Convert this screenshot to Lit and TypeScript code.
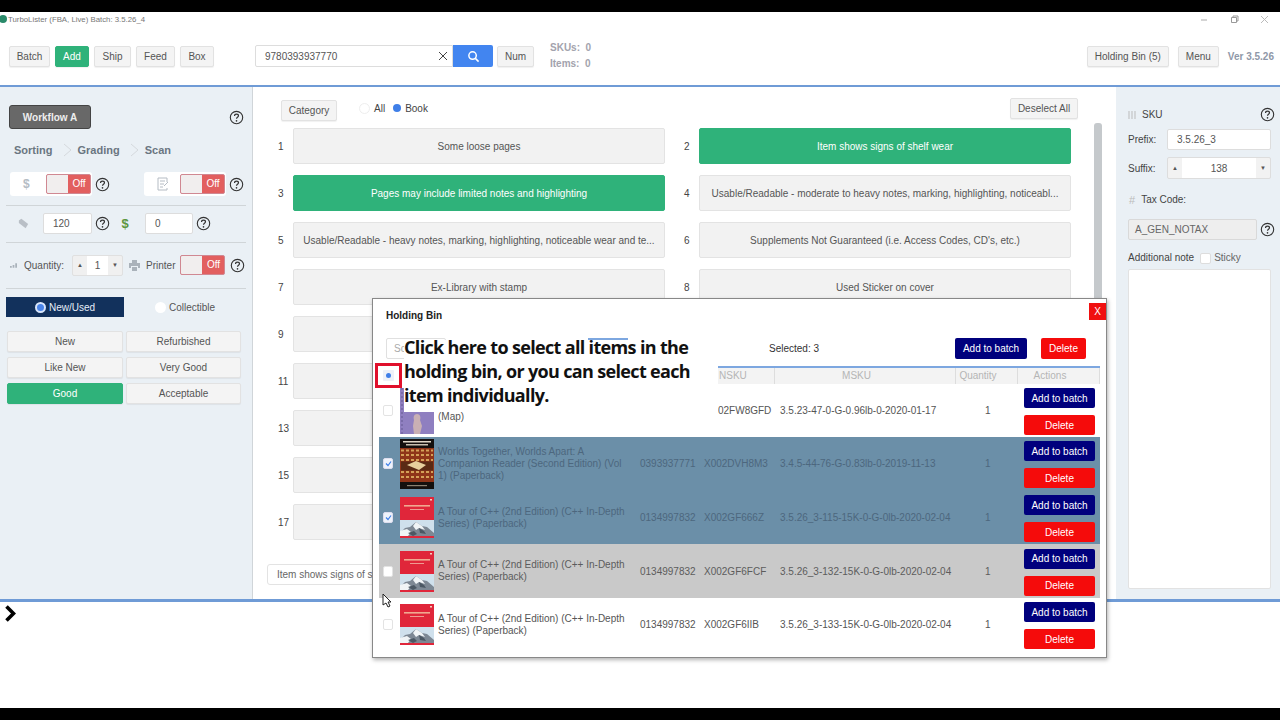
import { LitElement, html, css, svg } from "lit";
import { customElement } from "lit/decorators.js";

const q = html`<svg class="q" viewBox="0 0 16 16"><circle cx="8" cy="8" r="6.6" fill="none" stroke="#333" stroke-width="1.2"/><path d="M5.9 6.3c0-1.2 1-2 2.1-2s2.1.8 2.1 1.9c0 1.5-2.1 1.6-2.1 3.2" fill="none" stroke="#333" stroke-width="1.3"/><circle cx="8" cy="11.5" r=".9" fill="#333"/></svg>`;
const toggle = html`<span class="toggle"><span class="knob"></span><span class="off">Off</span></span>`;

const redBook = svg`<rect width="34" height="41" fill="#e0263a"/><rect x="4" y="8" width="26" height="1.6" fill="#f2c0a0" opacity=".85"/><rect x="10" y="12" width="14" height="1" fill="#f2b8a8" opacity=".8"/><rect x="30" y="2" width="2" height="1.5" fill="#f5d0c0"/><rect y="23" width="34" height="16" fill="#cfe0ec"/><path d="M0 36l5-5 5-1 6-5 6 4 5 1 7 6v3H0z" fill="#7d8894"/><path d="M16 25l6 4 3 4-6-2-3 2-3-4zM0 34l7-2 4 3-3 4H0z" fill="#f0f4f6"/><path d="M19 31l5 3 2 3-6-1zM8 36l6-2 3 3-4 2z" fill="#4c5864"/><rect y="39" width="34" height="2" fill="#e0263a"/>`;
const brownBook = svg`<rect width="34" height="50" fill="#14100e"/><rect x="3" y="2" width="28" height="1.5" fill="#e0d8c8"/><rect x="6" y="5" width="22" height="1.5" fill="#c8c0b0"/><rect x="0" y="9" width="34" height="34" fill="#8f3418"/><path d="M1 11.5h32M1 16h32M1 21h32M1 33h32M1 38h32" stroke="#d4a058" stroke-width="2" stroke-dasharray="3 2"/><path d="M1 27h32" stroke="#5a2a14" stroke-width="9"/><path d="M7 26l9-4 10 4-7 5z" fill="#e7cf9d"/><rect x="7" y="46" width="20" height="1.2" fill="#8a8070"/>`;
const mapBook = svg`<rect width="34" height="46" fill="#8f7fc0"/><path d="M17 26c3 0 4 3 3 6l2 6-2 8h-6l-1-8 1-6c-1-3 0-6 3-6z" fill="#c9b0b4"/><path d="M2 0v46" stroke="#655a92" stroke-dasharray="2 2"/>`;

const conditions = [
  ["1", "Some loose pages", false], ["2", "Item shows signs of shelf wear", true],
  ["3", "Pages may include limited notes and highlighting", true], ["4", "Usable/Readable - moderate to heavy notes, marking, highlighting, noticeabl...", false],
  ["5", "Usable/Readable - heavy notes, marking, highlighting, noticeable wear and te...", false], ["6", "Supplements Not Guaranteed (i.e. Access Codes, CD's, etc.)", false],
  ["7", "Ex-Library with stamp", false], ["8", "Used Sticker on cover", false],
  ["9", "", false], ["", "", false], ["11", "", false], ["", "", false],
  ["13", "", false], ["", "", false], ["15", "", false], ["", "", false],
  ["17", "", false], ["", "", false],
] as const;

const rows = [
  { cls: "plain", book: mapBook, h: 46, title: "(Map)", isbn: "", fnsku: "02FW8GFD", msku: "3.5.23-47-0-G-0.96lb-0-2020-01-17", check: "none" },
  { cls: "sel", book: brownBook, h: 50, title: "Worlds Together, Worlds Apart: A Companion Reader (Second Edition) (Vol 1) (Paperback)", isbn: "0393937771", fnsku: "X002DVH8M3", msku: "3.4.5-44-76-G-0.83lb-0-2019-11-13", check: "on" },
  { cls: "sel", book: redBook, h: 41, title: "A Tour of C++ (2nd Edition) (C++ In-Depth Series) (Paperback)", isbn: "0134997832", fnsku: "X002GF666Z", msku: "3.5.26_3-115-15K-0-G-0lb-2020-02-04", check: "on" },
  { cls: "hover", book: redBook, h: 41, title: "A Tour of C++ (2nd Edition) (C++ In-Depth Series) (Paperback)", isbn: "0134997832", fnsku: "X002GF6FCF", msku: "3.5.26_3-132-15K-0-G-0lb-2020-02-04", check: "white" },
  { cls: "plain", book: redBook, h: 41, title: "A Tour of C++ (2nd Edition) (C++ In-Depth Series) (Paperback)", isbn: "0134997832", fnsku: "X002GF6IIB", msku: "3.5.26_3-133-15K-0-G-0lb-2020-02-04", check: "none" },
];

@customElement("app-root")
export class AppRoot extends LitElement {
  static styles = css`
    :host { display: block; position: relative; width: 1280px; height: 720px; overflow: hidden; background: #000; font-family: "Liberation Sans", Arial, sans-serif; font-size: 10px; color: #444; }
    * { box-sizing: border-box; }
    .app { margin-top: 12px; height: 696px; background: #fff; display: flex; flex-direction: column; }
    .title { height: 14px; flex: none; display: flex; align-items: center; font-size: 7.8px; color: #777; }
    .title .logo { width: 8px; height: 8px; border-radius: 50%; background: #2a8a6a; margin-left: -1px; margin-right: 1px; }
    .winbtns { margin-left: auto; display: flex; gap: 21px; padding-right: 11px; align-items: center; color: #aaa; }
    .winbtns svg { width: 9px; height: 9px; display: block; }
    .toolbar { height: 61px; flex: none; display: flex; align-items: center; padding: 1px 6px 0 9px; border-bottom: 2px solid #6f9bd6; }
    .btn { height: 21px; display: inline-flex; align-items: center; justify-content: center; background: #f4f4f4; border: 1px solid #e2e2e2; border-radius: 2px; color: #555; font-size: 10px; white-space: nowrap; box-shadow: 0 1px 1px rgba(0,0,0,.06); }
    .group { display: flex; gap: 5px; }
    .w42 { width: 41px; } .w34 { width: 34px; } .w37 { width: 37px; } .w39 { width: 39px; }
    .green { background: #2fb27a; border-color: #2fb27a; color: #fff; }
    .search { margin-left: 41px; width: 198px; height: 22px; border: 1px solid #ddd; border-radius: 2px 0 0 2px; display: flex; align-items: center; justify-content: space-between; padding: 0 4px 0 9px; color: #555; font-size: 10px; }
    .search svg { width: 10px; height: 10px; }
    .sbtn { width: 40px; height: 22px; background: #4285f0; display: flex; align-items: center; justify-content: center; border-radius: 0 2px 2px 0; }
    .sbtn svg { width: 13px; height: 13px; }
    .num { margin-left: 4px; width: 37px; }
    .counts { margin-left: 16px; color: #a3a3ad; font-weight: 700; font-size: 10px; line-height: 16px; width: 50px; white-space: nowrap; display: grid; }
    .right { margin-left: auto; display: flex; align-items: center; }
    .holding { width: 82px; }
    .menu { width: 41px; margin-left: 9px; }
    .ver { color: #8f98a8; font-weight: 700; font-size: 10px; margin-left: 9px; }
    .main { height: 512px; flex: none; display: flex; }
    .left { width: 253px; flex: none; background: #eaf0f5; border-right: 1px solid #d0d5d9; padding: 18px 6px 0 6px; display: flex; flex-direction: column; }
    .wf-row { display: flex; justify-content: space-between; align-items: center; padding: 0 2.5px 0 3px; }
    .wf { width: 82px; height: 24px; border-radius: 3px; background: #686868; border: 1px solid #444; color: #eee; font-weight: 700; font-size: 10px; display: flex; align-items: center; justify-content: center; }
    .q { width: 15px; height: 15px; flex: none; display: block; }
    .steps { display: flex; align-items: center; margin: 14px 0 0 8px; font-weight: 700; font-size: 11px; color: #6a7681; height: 14px; }
    .steps svg { width: 9px; height: 14px; margin: 0 6px 0 10px; }
    .switches { display: flex; justify-content: space-between; padding: 0 2.5px 0 4px; margin-top: 15px; }
    .swgrp { display: flex; align-items: center; gap: 2.5px; }
    .swbox { width: 82px; height: 24px; background: #fff; border-radius: 3px; display: flex; align-items: center; justify-content: flex-end; padding-right: 1px; position: relative; }
    .swico { position: absolute; left: 13px; top: 5px; width: 13px; height: 14px; color: #b5bcc4; font-weight: 700; font-size: 12px; line-height: 14px; }
    .swico svg { width: 13px; height: 14px; display: block; }
    .toggle { width: 45px; height: 20px; border: 1px solid #d08892; border-radius: 2px; display: flex; background: #e25f5f; flex: none; overflow: hidden; }
    .knob { width: 21px; background: #f1eeee; }
    .off { flex: 1; text-align: center; color: #fff; font-size: 10px; line-height: 18px; }
    .sep { height: 1px; background: #d0d5d8; margin-top: 9px; }
    .sep.s2 { margin-top: 5.5px; }
    .sep.s3 { margin-top: 9.5px; }
    .nums { display: flex; align-items: center; height: 27px; margin-top: 3.5px; }
    .inp { height: 21px; background: #fff; border: 1px solid #ddd; border-radius: 2px; display: flex; align-items: center; color: #555; font-size: 10px; }
    .w49 { width: 49px; padding-left: 9px; }
    .w48 { width: 48px; padding-left: 9px; }
    .tag { width: 11px; height: 11px; margin: 0 14px 0 12px; }
    .dollar { color: #5c9640; font-size: 13px; font-weight: 700; width: 11px; text-align: center; margin: 0 14.5px 0 10px; }
    .nums .q { margin-left: 2.5px; }
    .qty { display: flex; align-items: center; height: 27px; margin-top: 8.5px; }
    .qty .lbl { color: #555; font-size: 10px; }
    .bars { width: 7px; height: 5px; margin: 0 7px 0 4px; }
    .spin { display: flex; height: 21px; width: 51px; margin-left: 8px; border: 1px solid #e0e0e0; border-radius: 2px; background: #f0f0f0; align-items: center; color: #555; }
    .spin .arr { display: flex; align-items: center; justify-content: center; width: 14px; font-size: 6px; color: #555; }
    .spin .v { background: #fff; height: 19px; width: 21px; display: flex; align-items: center; justify-content: center; }
    .qty .print { width: 11px; height: 11px; margin: 0 6.5px 0 5.5px; }
    .qty .toggle { margin: 0 4.5px 0 5px; }
    .cat-tabs { display: flex; margin-top: 8px; }
    .tab { width: 118px; height: 20px; display: flex; align-items: center; justify-content: center; gap: 3px; color: #555; font-size: 10px; }
    .tab.on { background: #12315c; color: #e5edf8; }
    .tab.col { width: 122px; flex: none; }
    .rad { width: 11px; height: 11px; border-radius: 50%; background: #fff; flex: none; }
    .rad.on { background: #4a84e8; border: 2px solid #d8e6fb; }
    .cond { display: grid; grid-template-columns: 116px 115px; gap: 5px 3px; margin: 14px 0 0 1px; }
    .cond .btn { width: 100%; height: 21px; }
    .mid { width: 863px; flex: none; padding: 11px 0 0 12px; display: flex; flex-direction: column; position: relative; }
    .mid-top { display: flex; align-items: flex-start; height: 23px; }
    .cat { width: 56px; height: 21px; margin: 2px 0 0 16px; }
    .radios { display: flex; align-items: center; gap: 4px; margin-left: 22px; height: 20px; font-size: 10px; color: #444; }
    .radios .c { width: 11px; height: 11px; border-radius: 50%; background: #fff; border: 1px solid #eee; }
    .radios .b { width: 8px; height: 8px; border-radius: 50%; background: #3f7fe8; margin-left: 4px; }
    .desel { margin-left: auto; width: 68px; height: 21px; font-size: 10px; margin-right: 38px; }
    .grid { display: grid; grid-template-columns: 372px 372px; column-gap: 34px; row-gap: 11px; margin: 7px 0 0 28px; }
    .row { display: flex; align-items: center; position: relative; }
    .row .n { position: absolute; left: -15px; font-size: 10px; color: #444; }
    .cbtn { width: 372px; height: 36px; background: #f2f2f2; border: 1px solid #e3e3e3; border-radius: 2px; color: #555; font-size: 10px; display: flex; align-items: center; justify-content: center; white-space: nowrap; overflow: hidden; }
    .cbtn.on { background: #2fb27a; border-color: #2fb27a; color: #fff; }
    .scroll { position: absolute; left: 841px; top: 36px; width: 8px; height: 190px; background: #c5c9cc; border-radius: 3px; }
    .sign { position: absolute; left: 14px; top: 477px; width: 170px; height: 21px; padding-left: 9px; border: 1px solid #e3e3e3; background: #fff; border-radius: 3px; display: flex; align-items: center; color: #666; white-space: nowrap; }
    .side { width: 164px; flex: none; background: #eaf0f5; padding: 20px 9px 0 12px; display: flex; flex-direction: column; }
    .sku { display: flex; align-items: center; color: #444; font-size: 10px; justify-content: space-between; margin-right: -3.5px; }
    .sku .s { display: inline-flex; gap: 6px; align-items: center; }
    .stripe { width: 8px; height: 8px; }
    .fr { display: flex; align-items: center; margin-top: 7px; justify-content: space-between; font-size: 10px; color: #444; }
    .fr.suf { margin-top: 7px; }
    .fr .inp { width: 104px; padding-left: 9px; }
    .spin2 { width: 104px; height: 22px; border: 1px solid #ddd; background: #f2f2f2; display: flex; align-items: center; border-radius: 2px; }
    .spin2 .arr { width: 14px; text-align: center; font-size: 6px; color: #555; }
    .spin2 .v { flex: 1; height: 20px; background: #fff; display: flex; align-items: center; justify-content: center; color: #555; font-size: 10px; }
    .tax { margin-top: 15px; display: flex; align-items: center; gap: 6px; color: #444; line-height: 12px; padding-left: 1px; }
    .tax i { color: #bbb; font-style: normal; font-size: 11px; }
    .sel-row { display: flex; align-items: center; gap: 2.5px; margin-top: 13px; }
    .select { width: 129px; height: 21px; background: #eeeeee; border: 1px solid #d9d9d9; border-radius: 2px; padding-left: 6px; display: flex; align-items: center; color: #666; font-size: 10px; flex: none; }
    .note { display: flex; align-items: center; margin-top: 12px; font-size: 10px; gap: 6px; color: #444; line-height: 12px; }
    .box { width: 11px; height: 11px; background: #fff; border: 1px solid #ddd; border-radius: 2px; }
    .note .g { color: #666; margin-left: -3px; }
    .area { margin-top: 5px; width: 143px; height: 320px; background: #fff; border: 1px solid #e2e2e2; border-radius: 2px; }
    .bottom { flex: 1; border-top: 3px solid #6f9bd6; padding: 3px 0 0 4px; }
    .bottom svg { width: 12px; height: 17px; display: block; }
    .modal { position: absolute; left: 372px; top: 298px; width: 735px; height: 360px; background: #fff; border: 1px solid #888; box-shadow: 1px 2px 4px rgba(0,0,0,.3); padding: 0 6px; }
    .x { position: absolute; top: 4px; right: 0; width: 17px; height: 17px; background: #f01010; color: #fff; display: flex; align-items: center; justify-content: center; font-size: 10px; }
    .mhead { font-weight: 700; font-size: 10px; color: #222; height: 50px; padding: 11px 0 0 7px; }
    .tools { display: flex; align-items: center; height: 21px; margin-top: -11px; position: relative; }
    .srch { width: 60px; height: 21px; border: 1px solid #e0e0e0; border-radius: 2px; margin-left: 7px; color: #aaa; padding-left: 7px; line-height: 19px; overflow: hidden; }
    .bluetick { position: absolute; left: 209px; top: 0; width: 40px; height: 2px; background: #7da7e0; }
    .selected { position: absolute; left: 390px; color: #333; font-size: 10px; }
    .mb { height: 20px; border-radius: 2px; display: flex; align-items: center; justify-content: center; color: #fff; font-size: 10px; flex: none; }
    .navy { background: #00007d; }
    .red { background: #f50b0b; }
    .tools .mb { height: 21px; }
    .tools .navy { position: absolute; left: 576px; width: 72px; }
    .tools .red { position: absolute; left: 662px; width: 45px; }
    .thead { position: relative; height: 18px; margin: 7px 0 0 0; color: #b5b5b5; font-size: 10px; }
    .thead .bar { position: absolute; left: 339px; right: 0; top: 0; bottom: 0; background: #f3f3f3; border-top: 2px solid #7da7e0; display: grid; grid-template-columns: 57px 181px 62px 1fr; line-height: 15px; }
    .thead .bar span { border-right: 1px solid #ddd; white-space: nowrap; overflow: hidden; text-align: center; padding-right: 17px; }
    .thead .bar .first { text-align: left; padding: 0 0 0 1px; }
    .tr { height: 53.7px; display: grid; grid-template-columns: 21px 38px 202px 64px 76px 190px 34px 1fr; align-items: center; }
    .tr.first { height: 53px; }
    .tr.sel { background: #6b8fa8; color: #4d677e; }
    .tr.hover { background: #c9c9c9; color: #5c5c5c; }
    .tr.plain { background: #fff; color: #555; }
    .chk { width: 10px; height: 11px; border: 1px solid #e3e3e3; border-radius: 2px; background: #fff; margin-left: 4px; display: flex; align-items: center; justify-content: center; }
    .chk svg { width: 7px; height: 7px; }
    .chk.on { background: #eef3fb; border-color: #dde; }
    .cover { width: 34px; display: block; }
    .ttl { line-height: 11.8px; font-size: 10px; padding-right: 9px; }
    .tr.first .ttl { padding-top: 12px; }
    .tr.first .fn { padding-left: 14px; }
    .qtyc { padding-left: 15px; }
    .msku { white-space: nowrap; }
    .acts { display: flex; flex-direction: column; gap: 7px; align-items: flex-end; padding: 2px 5px 0 0; }
    .acts .mb { width: 71px; }
    .overlay { position: absolute; left: 404px; top: 340px; width: 314px; height: 72px; background: #fff; font-family: "Open Sans", sans-serif; font-weight: 700; font-size: 18px; line-height: 24px; color: #111; letter-spacing: -.66px; white-space: nowrap; }
    .overlay span { display: block; margin-top: -5px; }
    .redbox { position: absolute; left: 375px; top: 363px; width: 27px; height: 25px; border: 3px solid #e0102c; display: flex; align-items: center; justify-content: center; background: #fff; }
    .redbox i { width: 11px; height: 11px; background: #eef1f8; border-radius: 1px; display: flex; align-items: center; justify-content: center; }
    .redbox b { width: 5px; height: 5px; border-radius: 50%; background: #3f7fe8; }
    .cursor { position: absolute; left: 382px; top: 594px; width: 10px; height: 14px; }
  `;

  render() {
    return html`
      <div class="app">
        <div class="title">
          <span class="logo"></span>TurboLister (FBA, Live) Batch: 3.5.26_4
          <span class="winbtns">
            <svg viewBox="0 0 9 9"><path d="M1 5h6" stroke="#aaa"/></svg>
            <svg viewBox="0 0 9 9"><path d="M1.5 2.5h5v5h-5zM3 2.5V1h5v5H6.5" fill="none" stroke="#999"/></svg>
            <svg viewBox="0 0 9 9"><path d="M1 1l7 7M8 1L1 8" stroke="#bbb"/></svg>
          </span>
        </div>
        <div class="toolbar">
          <div class="group">
            <span class="btn w42">Batch</span><span class="btn w34 green">Add</span><span class="btn w37">Ship</span><span class="btn w39">Feed</span><span class="btn w34">Box</span>
          </div>
          <div class="search">9780393937770<svg viewBox="0 0 10 10"><path d="M1 1l8 8M9 1l-8 8" stroke="#444"/></svg></div>
          <div class="sbtn"><svg viewBox="0 0 14 14"><circle cx="6" cy="6" r="4" fill="none" stroke="#fff" stroke-width="1.6"/><path d="M9 9l3.5 3.5" stroke="#fff" stroke-width="1.6"/></svg></div>
          <span class="btn num">Num</span>
          <div class="counts"><span>SKUs:&nbsp; 0</span><span>Items:&nbsp; 0</span></div>
          <div class="right">
            <span class="btn holding">Holding Bin (5)</span>
            <span class="btn menu">Menu</span>
            <span class="ver">Ver 3.5.26</span>
          </div>
        </div>
        <div class="main">
          <div class="left">
            <div class="wf-row"><span class="wf">Workflow A</span>${q}</div>
            <div class="steps">Sorting<svg viewBox="0 0 9 14"><path d="M1 1l7 6-7 6" fill="none" stroke="#d5d9dd"/></svg>Grading<svg viewBox="0 0 9 14"><path d="M1 1l7 6-7 6" fill="none" stroke="#d5d9dd"/></svg>Scan</div>
            <div class="switches">
              <div class="swgrp"><span class="swbox"><span class="swico">$</span>${toggle}</span>${q}</div>
              <div class="swgrp"><span class="swbox"><span class="swico"><svg viewBox="0 0 13 14"><path d="M10 5V1H1v12h9v-2M3 4h5M3 7h4M3 10h3M7 9l4-4" fill="none" stroke="#b5bcc4"/></svg></span>${toggle}</span>${q}</div>
            </div>
            <div class="sep"></div>
            <div class="nums">
              <svg class="tag" viewBox="0 0 13 13"><path d="M1 3l3-2 8 6-3 5-8-6z" fill="#b9bfc6"/></svg>
              <span class="inp w49">120</span>${q}
              <span class="dollar">$</span>
              <span class="inp w48">0</span>${q}
            </div>
            <div class="sep s2"></div>
            <div class="qty">
              <svg class="bars" viewBox="0 0 8 5"><path d="M0 3h2v2H0zM3 2h2v3H3zM6 0h2v5H6z" fill="#a9b2ba"/></svg>
              <span class="lbl">Quantity:</span>
              <span class="spin"><span class="arr">▲</span><span class="v">1</span><span class="arr">▼</span></span>
              <svg class="print" viewBox="0 0 11 11"><path d="M3 0h5v3H3zM0 3h11v5H9V6H2v2H0zM3 7h5v4H3z" fill="#aab2ba"/></svg>
              <span class="lbl">Printer</span>${toggle}${q}
            </div>
            <div class="sep s3"></div>
            <div class="cat-tabs">
              <span class="tab on"><span class="rad on"></span>New/Used</span>
              <span class="tab col"><span class="rad"></span>Collectible</span>
            </div>
            <div class="cond">
              <span class="btn">New</span><span class="btn">Refurbished</span>
              <span class="btn">Like New</span><span class="btn">Very Good</span>
              <span class="btn green">Good</span><span class="btn">Acceptable</span>
            </div>
          </div>
          <div class="mid">
            <div class="mid-top">
              <span class="btn cat">Category</span>
              <div class="radios"><span class="c"></span>All<span class="b"></span>Book</div>
              <span class="btn desel">Deselect All</span>
            </div>
            <div class="grid">
              ${conditions.map(([n, t, on]) => html`<div class="row"><span class="n">${n}</span><span class="cbtn ${on ? "on" : ""}">${t}</span></div>`)}
            </div>
            <div class="scroll"></div>
            <div class="sign">Item shows signs of s</div>
          </div>
          <div class="side">
            <div class="sku"><span class="s"><svg class="stripe" viewBox="0 0 8 8"><path d="M1 0v8M4 0v8M7 0v8" stroke="#bbb"/></svg>SKU</span>${q}</div>
            <div class="fr">Prefix:<span class="inp">3.5.26_3</span></div>
            <div class="fr suf">Suffix:<span class="spin2"><span class="arr">▲</span><span class="v">138</span><span class="arr">▼</span></span></div>
            <div class="tax"><i>#</i>Tax Code:</div>
            <div class="sel-row"><span class="select">A_GEN_NOTAX</span>${q}</div>
            <div class="note">Additional note<span class="box"></span><span class="g">Sticky</span></div>
            <div class="area"></div>
          </div>
        </div>
        <div class="bottom"><svg viewBox="0 0 12 17"><path d="M2.5 1.5L9.5 8.5L2.5 15.5" fill="none" stroke="#000" stroke-width="3.6"/></svg></div>
      </div>

      <div class="modal">
        <span class="x">X</span>
        <div class="mhead">Holding Bin</div>
        <div class="tools">
          <span class="srch">Sc</span>
          <span class="bluetick"></span>
          <span class="selected">Selected: 3</span>
          <span class="mb navy">Add to batch</span>
          <span class="mb red">Delete</span>
        </div>
        <div class="thead"><div class="bar"><span class="first">NSKU</span><span>MSKU</span><span>Quantity</span><span>Actions</span></div></div>
        ${rows.map((r, i) => html`
          <div class="tr ${r.cls} ${i === 0 ? "first" : ""}">
            <span class="chk ${r.check === "on" ? "on" : ""}">${r.check === "on" ? html`<svg viewBox="0 0 7 7"><path d="M1 3.5l2 2 3-4" fill="none" stroke="#3f7fe8" stroke-width="1.2"/></svg>` : ""}</span>
            <svg class="cover" viewBox="0 0 34 ${r.h}" style="height:${r.h}px">${r.book}</svg>
            <span class="ttl">${r.title}</span>
            <span>${r.isbn}</span>
            <span class="fn">${r.fnsku}</span>
            <span class="msku">${r.msku}</span>
            <span class="qtyc">1</span>
            <span class="acts"><span class="mb navy">Add to batch</span><span class="mb red">Delete</span></span>
          </div>`)}
      </div>

      <div class="overlay"><span>Click here to select all items in the<br>holding bin, or you can select each<br>item individually.</span></div>
      <div class="redbox"><i><b></b></i></div>
      <svg class="cursor" viewBox="0 0 10 14"><path d="M1 0v11l3-2 2 4 2-1-2-4h3z" fill="#fff" stroke="#222"/></svg>
    `;
  }
}
